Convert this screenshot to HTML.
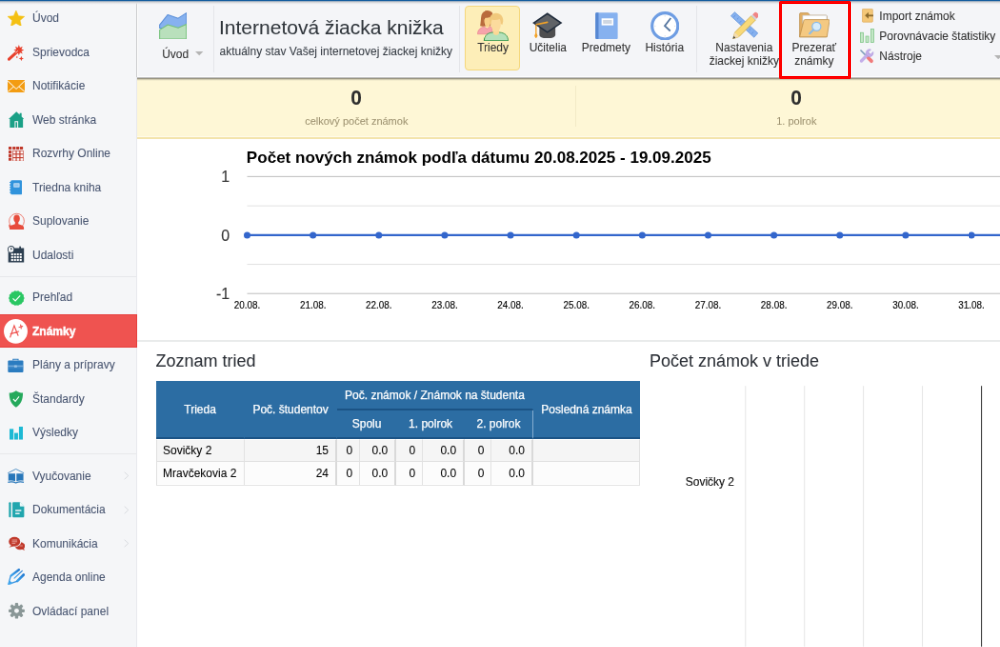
<!DOCTYPE html>
<html lang="sk">
<head>
<meta charset="utf-8">
<title>Internetová žiacka knižka</title>
<style>
*{box-sizing:border-box;margin:0;padding:0}
html,body{width:1000px;height:647px;overflow:hidden;background:#fff}
body{font-family:"Liberation Sans",Arial,sans-serif;font-size:12px;color:#333;position:relative}
#page{-webkit-text-stroke:.06px;position:absolute;left:0;top:0;width:1050px;height:680px;overflow:hidden;background:#fff;transform:scale(.95238);transform-origin:0 0;will-change:transform}
#topline{position:absolute;left:0;top:0;width:1050px;height:5px;background:linear-gradient(#125c9e 0,#125c9e 1px,#9fb0c2 1.5px,#cfd0d3 2.2px,#e4e5e8 3.2px,rgba(244,245,248,0) 4.8px);z-index:20}
/* sidebar */
#side{position:absolute;left:0;top:0;width:144px;height:680px;background:#f5f6f8;border-right:1px solid #e8e9ed}
#side .tx{position:absolute;left:34px;height:14px;line-height:14px;color:#485570;font-size:12px;white-space:nowrap}
#side svg{position:absolute}
#side .actbg{position:absolute;left:0;width:144px;background:#ef5350;border:1px solid #e63f3c;border-left:0}
#side .tx.act{color:#fff;font-weight:bold;-webkit-text-stroke:.45px #fff}
#side .sep{position:absolute;left:0;width:143px;height:1px;background:#e7e8eb}
#side svg.chev{left:129.6px;width:5.7px;height:9px}
/* toolbar */
#tb{position:absolute;left:144px;top:0;width:906px;height:81px;background:#f4f5f8;box-shadow:-1px 0 0 #cbcbcd,inset 1px -1px 0 rgba(255,255,255,.85);z-index:5}
#tbsh{position:absolute;left:144px;top:81px;width:906px;height:4px;background:linear-gradient(#fafbfd 0,#fafbfd .45px,rgba(0,0,0,.5) .55px,rgba(0,0,0,.45) 1.3px,rgba(0,0,0,.2) 2.3px,rgba(0,0,0,0) 3.8px);z-index:6}
#tb .vs{position:absolute;top:6px;width:1px;height:70px;background:#e4e5e9}
#tb .lbl{position:absolute;top:43px;text-align:center;white-space:nowrap;color:#303030;font-size:12px;line-height:14px;width:120px;margin-left:-60px}
#tb .ic{position:absolute}
#ttl{position:absolute;left:86px;top:16px;font-size:21px;line-height:25px;color:#2f353b;white-space:nowrap}
#sub{position:absolute;left:86.5px;top:47px;font-size:12px;line-height:14px;color:#363c44;white-space:nowrap}
#actb{position:absolute;left:344.2px;top:5.6px;width:58px;height:68px;background:#fdeeb8;border:1px solid #f5d77c;border-radius:4px}
#redbox{position:absolute;left:779px;top:1px;width:72px;height:78px;border:3px solid #fe0000;border-radius:1.5px;z-index:50}
#tb .sl{position:absolute;left:779.3px;font-size:12px;line-height:14px;color:#303030;white-space:nowrap}
/* band */
#band{position:absolute;left:144px;top:82px;width:906px;height:64px;background:#fef7d6;border-bottom:2px solid #f3e4ac;box-shadow:inset 0 -1px 0 #fffbe9}
#band .n{position:absolute;font-weight:bold;font-size:22px;color:#2e2e2e;transform:translateX(-50%) scaleX(.95);line-height:24px;top:9px}
#band .c{position:absolute;font-size:11px;color:#9d9270;transform:translateX(-50%);line-height:13px;top:39px;white-space:nowrap}
#band .d{position:absolute;left:460px;top:8px;width:1px;height:43px;background:#f3eac6}
h2{position:absolute;font-weight:normal;font-size:18px;color:#2b2f36;line-height:21px;white-space:nowrap}
#hr{position:absolute;left:144px;top:357px;width:906px;height:2px;background:#e9ebeb}
table{position:absolute;left:164px;top:400px;border-collapse:separate;border-spacing:0;font-size:12px;table-layout:fixed;width:508px}
th{background:#2c6da3;color:#fff;-webkit-text-stroke:.25px #fff;font-weight:normal;text-align:center;vertical-align:middle;white-space:nowrap;padding:0;line-height:14px}
tr.h1 th{height:31px;border-right:1px solid #2c6da3;border-bottom:2px solid #1b5385}
tr.h1 th.grp{height:31px}
tr.h1 th[rowspan]{height:61px;padding-top:1px}
tr.h2 th{height:30px;border-bottom:2px solid #1b5385;padding-top:0}
tr.h1 th.last{border-right:0}
tr.h2 th:last-child{border-right:1px solid #86add0}
td{height:25px;border-bottom:1px solid #e0e0e0;border-right:1px solid #e2e2e2;background:#f5f5f5;color:#000;padding:0 7px 0 6px;white-space:nowrap;vertical-align:middle;line-height:14px;text-align:right}
tbody tr:first-child td{height:24px;border-top:1px solid #fff}
td.g{border-right:2px solid #d9d9d9}
td:first-child{border-left:1px solid #e0e0e0}
tbody tr:nth-child(2) td{background:#fcfcfc}
td.l{text-align:left}
</style>
</head>
<body>
<div id="page">
<div id="side">
<svg viewBox="0 0 16 15.300" preserveAspectRatio="none" style="left:8.19px;top:10.92px;width:17.75px;height:16.59px"><polygon fill="#f4c013" stroke="#f4c013" stroke-width=".5" stroke-linejoin="round" points="8.00,0.05 10.32,5.26 16.00,5.86 11.76,9.68 12.94,15.27 8.00,12.42 3.06,15.27 4.24,9.68 0.00,5.86 5.68,5.26"/></svg>
<div class="tx" style="top:12px">Úvod</div>
<svg viewBox="0 0 16.200 16.300" preserveAspectRatio="none" style="left:8.40px;top:46.52px;width:17.01px;height:17.12px"><g fill="#e8402c"><path d="M1.400 14.500L9.800 6.700" stroke="#e8402c" stroke-width="2.900" stroke-linecap="round" fill="none"/><polygon points="11.30,0.00 12.33,2.81 15.05,1.55 13.79,4.27 16.60,5.30 13.79,6.33 15.05,9.05 12.33,7.79 11.30,10.60 10.27,7.79 7.55,9.05 8.81,6.33 6.00,5.30 8.81,4.27 7.55,1.55 10.27,2.81"/><polygon points="13.70,11.30 14.41,13.09 16.20,13.80 14.41,14.51 13.70,16.30 12.99,14.51 11.20,13.80 12.99,13.09"/><rect x="8.650" y="11.750" width="1.300" height="1.300"/></g><path d="M8 8.200l2.400-2.200" stroke="#f5f6f8" stroke-width=".7" fill="none"/></svg>
<div class="tx" style="top:48px">Sprievodca</div>
<svg viewBox="0 0 16 16" preserveAspectRatio="none" style="left:8.09px;top:83.90px;width:18.17px;height:13.12px"><rect x="0" y="0" width="16" height="16" fill="#f39c12"/><path d="M0 1l8 10.500L16 1M0 15.200l5.800-7M16 15.200l-5.800-7" fill="none" stroke="#fdf3e0" stroke-width=".9"/></svg>
<div class="tx" style="top:83px">Notifikácie</div>
<svg viewBox="0 0 16 16" preserveAspectRatio="none" style="left:8.93px;top:117.39px;width:16.48px;height:17.01px"><path fill="#1aa086" d="M8 .3l3.300 3V1.700h2v3.400L16 7.600h-1.300V16H1.300V7.600H0z"/><path fill="#f5f6f8" d="M6.200 9.600h3.600V16H6.200z"/><path fill="#1aa086" d="M7.200 10.600h1.600V16H7.200z"/></svg>
<div class="tx" style="top:119px">Web stránka</div>
<svg viewBox="0 0 16 16" preserveAspectRatio="none" style="left:9.45px;top:153.72px;width:15.75px;height:15.33px"><rect x="0" y="0" width="3.200" height="3.200" fill="#c0392b"/><rect x="4.30" y="0" width="3.200" height="3.200" fill="#c0392b"/><rect x="0" y="4.30" width="3.200" height="3.200" fill="#c0392b"/><rect x="8.23" y="0" width="3.200" height="3.200" fill="#c0392b"/><rect x="0" y="8.23" width="3.200" height="3.200" fill="#c0392b"/><rect x="12.16" y="0" width="3.200" height="3.200" fill="#c0392b"/><rect x="0" y="12.16" width="3.200" height="3.200" fill="#c0392b"/><rect x="4.200" y="4.200" width="11.800" height="11.800" fill="#c0392b"/><rect x="4.80" y="4.80" width="2.800" height="2.800" fill="#fdf3f2"/><rect x="8.73" y="4.80" width="2.800" height="2.800" fill="#fdf3f2"/><rect x="12.66" y="4.80" width="2.800" height="2.800" fill="#fdf3f2"/><rect x="4.80" y="8.73" width="2.800" height="2.800" fill="#fdf3f2"/><rect x="8.73" y="8.73" width="2.800" height="2.800" fill="#fdf3f2"/><rect x="12.66" y="8.73" width="2.800" height="2.800" fill="#fdf3f2"/><rect x="4.80" y="12.66" width="2.800" height="2.800" fill="#fdf3f2"/><rect x="8.73" y="12.66" width="2.800" height="2.800" fill="#fdf3f2"/><rect x="12.66" y="12.66" width="2.800" height="2.800" fill="#fdf3f2"/></svg>
<div class="tx" style="top:154px">Rozvrhy Online</div>
<svg viewBox="0 0 16 16" preserveAspectRatio="none" style="left:9.97px;top:189.00px;width:13.44px;height:15.54px"><rect x="1.300" y=".2" width="14.500" height="15.600" rx="1.700" fill="#3093dc"/><path d="M0 2.600h2.200M0 5.300h2.200M0 8h2.200M0 10.700h2.200M0 13.400h2.200" stroke="#3093dc" stroke-width="1.100"/><rect x="5" y="3.400" width="7.600" height="4.600" rx=".7" fill="#bfdcf4"/><rect x="6.200" y="4.500" width="5.200" height="2.300" fill="#8fc3ee"/></svg>
<div class="tx" style="top:190px">Triedna kniha</div>
<svg viewBox="0 0 16.300 17.500" preserveAspectRatio="none" style="left:8.61px;top:222.81px;width:17.12px;height:18.38px"><path d="M3.500 14.600A7.500 7.500 0 1 1 13.200 14.200" fill="none" stroke="#ec6a5c" stroke-width=".8"/><path fill="#e74c3c" d="M.2 11.800l3.400 2.600-3 .9z"/><g fill="#e74c3c"><ellipse cx="8.150" cy="6.300" rx="3.100" ry="3.900"/><path d="M6.500 9h3.300v2.600l4 1.500c1 .4 1.500 1.200 1.500 2.200v2.200H1v-2.200c0-1 .5-1.800 1.500-2.200l4-1.500z"/></g></svg>
<div class="tx" style="top:225px">Suplovanie</div>
<svg viewBox="0 0 16 16" preserveAspectRatio="none" style="left:8.09px;top:258.30px;width:17.43px;height:17.85px"><path fill="#2c3e50" d="M2.200 2.300h13.600v13.400H.6V6z"/><rect x="11.300" y=".6" width="1.500" height="3" fill="#2c3e50"/><rect x="3.40" y="7.20" width="1.900" height="1.900" fill="#fff"/><rect x="6.15" y="7.20" width="1.900" height="1.900" fill="#fff"/><rect x="8.90" y="7.20" width="1.900" height="1.900" fill="#fff"/><rect x="11.65" y="7.20" width="1.900" height="1.900" fill="#fff"/><rect x="3.40" y="9.85" width="1.900" height="1.900" fill="#fff"/><rect x="6.15" y="9.85" width="1.900" height="1.900" fill="#fff"/><rect x="8.90" y="9.85" width="1.900" height="1.900" fill="#fff"/><rect x="11.65" y="9.85" width="1.900" height="1.900" fill="#fff"/><rect x="3.40" y="12.50" width="1.900" height="1.900" fill="#fff"/><rect x="6.15" y="12.50" width="1.900" height="1.900" fill="#fff"/><rect x="8.90" y="12.50" width="1.900" height="1.900" fill="#fff"/><rect x="11.65" y="12.50" width="1.900" height="1.900" fill="#fff"/><circle cx="3.300" cy="3.500" r="3" fill="#f5f6f8" stroke="#2c3e50" stroke-width=".9"/><path d="M3.300 1.800v1.900l1.200-.9" fill="none" stroke="#2c3e50" stroke-width=".7"/></svg>
<div class="tx" style="top:261px">Udalosti</div>
<div class="sep" style="top:290px"></div>
<svg viewBox="0 0 16 16" preserveAspectRatio="none" style="left:8.82px;top:305.24px;width:16.70px;height:16.07px"><polygon fill="#2ac763" points="16.00,8.00 15.17,9.64 15.21,11.47 13.75,12.58 12.99,14.25 11.19,14.62 9.78,15.80 8.00,15.35 6.22,15.80 4.81,14.62 3.01,14.25 2.25,12.58 0.79,11.47 0.83,9.64 0.00,8.00 0.83,6.36 0.79,4.53 2.25,3.42 3.01,1.75 4.81,1.38 6.22,0.20 8.00,0.65 9.78,0.20 11.19,1.38 12.99,1.75 13.75,3.42 15.21,4.53 15.17,6.36"/><path d="M4.300 8.300l2.500 2.600 4.900-5.600" fill="none" stroke="#fff" stroke-width="1.150"/></svg>
<div class="tx" style="top:305px">Prehľad</div>
<div class="actbg" style="top:330px;height:35px"></div>
<svg viewBox="0 0 16 16" preserveAspectRatio="none" style="left:4.20px;top:335.27px;width:24.99px;height:25.73px"><circle cx="8" cy="8" r="8" fill="#fff"/><path d="M4.300 11.800L7 4.300l2.600 6.400M4.600 9.700l5.400-1.600M10.300 5.300l2.300-.6M11.300 3.800l.4 2.400" fill="none" stroke="#ef5350" stroke-width=".75" stroke-linecap="round"/></svg>
<div class="tx act" style="top:341px">Známky</div>
<svg viewBox="0 0 16 16" preserveAspectRatio="none" style="left:8.29px;top:375.69px;width:16.80px;height:16.07px"><path d="M5.500 2.600V1.200h5v1.400" fill="none" stroke="#2b7cc0" stroke-width="1"/><rect x=".3" y="2.400" width="15.400" height="12.600" rx="1" fill="#2b7cc0"/><rect x=".3" y="7.700" width="15.400" height=".9" fill="#9cc4e6"/><rect x=".3" y="9.600" width="15.400" height=".6" fill="#6aa5d6"/><rect x="6.600" y="7.400" width="2.800" height="2.400" rx=".5" fill="#9cc4e6"/></svg>
<div class="tx" style="top:376px">Plány a prípravy</div>
<svg viewBox="0 0 16 16" preserveAspectRatio="none" style="left:9.45px;top:410.44px;width:15.75px;height:17.96px"><path fill="#25a95c" d="M8 .2c2.200 1.400 4.600 2 7.300 2.100 0 6.300-2.300 11-7.300 13.500C3 13.300.7 8.600.7 2.300 3.400 2.200 5.800 1.600 8 .2z"/><path d="M5 8l2.200 2.200 4-4.600" fill="none" stroke="#fff" stroke-width="1.100"/></svg>
<div class="tx" style="top:412px">Štandardy</div>
<svg viewBox="0 0 16 16" preserveAspectRatio="none" style="left:10.08px;top:448.25px;width:14.18px;height:13.55px"><rect x="0" y="2.800" width="4.700" height="13.200" fill="#1db9d4"/><rect x="5.700" y="7.800" width="4.400" height="8.200" fill="#1db9d4"/><rect x="11.200" y="0" width="4.800" height="16" fill="#1db9d4"/></svg>
<div class="tx" style="top:447px">Výsledky</div>
<div class="sep" style="top:476px"></div>
<svg viewBox="0 0 16 16" preserveAspectRatio="none" style="left:8.40px;top:491.72px;width:17.32px;height:16.07px"><path d="M.2 4.700L8 .5l7.800 4.200" fill="none" stroke="#2877ba" stroke-width=".75"/><path fill="#2877ba" d="M.7 5.300h6.700v7.900C5.400 12.300 3 12.200.7 12.800zM15.300 5.300H8.600v7.900c2-.9 4.400-1 6.700-.4z"/><path d="M.3 14.300c2.700-.8 5.500-.6 7.700.7 2.200-1.300 5-1.500 7.700-.7" fill="none" stroke="#2877ba" stroke-width="1.200"/></svg>
<svg class="chev" viewBox="0 0 6 9" style="top:495.45px"><path d="M.7.5l4.300 4-4.300 4" fill="none" stroke="#d4d6da" stroke-width=".9"/></svg>
<div class="tx" style="top:493px">Vyučovanie</div>
<svg viewBox="0 0 16 16" preserveAspectRatio="none" style="left:8.82px;top:527.10px;width:16.70px;height:16.59px"><rect x=".3" y=".3" width="2.200" height="15.400" rx="1" fill="#21a6ae"/><path fill="#21a6ae" d="M5.200.3h6.300l4.200 4.200v9.900c0 .8-.5 1.300-1.300 1.300H5.200c-.8 0-1.300-.5-1.300-1.300V1.600c0-.8.500-1.300 1.300-1.300z"/><path fill="#eef8f9" d="M11.300 0v3.500c0 .7.400 1.100 1.100 1.100H16z"/><rect x="6.800" y="8" width="6" height="1.400" fill="#f5f6f8"/><rect x="6.800" y="11.100" width="4.300" height="1.400" fill="#f5f6f8"/></svg>
<svg class="chev" viewBox="0 0 6 9" style="top:530.95px"><path d="M.7.5l4.300 4-4.300 4" fill="none" stroke="#d4d6da" stroke-width=".9"/></svg>
<div class="tx" style="top:528px">Dokumentácia</div>
<svg viewBox="0 0 16 16" preserveAspectRatio="none" style="left:8.61px;top:562.59px;width:17.12px;height:15.75px"><g fill="#c0392b"><ellipse cx="11.200" cy="10.400" rx="5" ry="4.100"/><path d="M12.500 13.600l3.400 1.600-1.500-3z"/></g><ellipse cx="6" cy="6" rx="6.300" ry="5.600" fill="#f5f6f8"/><g fill="#c0392b"><ellipse cx="5.800" cy="5.800" rx="5.600" ry="5"/><path d="M3.300 9.300L.3 12l4.900-1.300z"/></g><path d="M3.300 4.100h5.200M3.300 5.900h5.200M3.300 7.700h3.500" stroke="#e9a7a0" stroke-width=".9"/><path d="M10.700 10.200h3.200" stroke="#e9a7a0" stroke-width=".8"/></svg>
<svg class="chev" viewBox="0 0 6 9" style="top:566.45px"><path d="M.7.5l4.300 4-4.300 4" fill="none" stroke="#d4d6da" stroke-width=".9"/></svg>
<div class="tx" style="top:564px">Komunikácia</div>
<svg viewBox="0 0 17 16.800" preserveAspectRatio="none" style="left:8.40px;top:596.93px;width:17.85px;height:17.64px"><defs><linearGradient id="pg" x1="0" y1="1" x2="1" y2="0"><stop offset="0" stop-color="#3fa4ec"/><stop offset="1" stop-color="#237bd2"/></linearGradient></defs><g fill="none" stroke="url(#pg)" stroke-linecap="round" stroke-linejoin="round"><path d="M3.600 7L11.300 1.200" stroke-width="2.300"/><path d="M6.700 9.700L14.600 2.300" stroke-width="1.100"/><path d="M9.700 12.500L16 6.200" stroke-width="2.500"/><path d="M3 7.600L.8 15.700l8.600-2.900" stroke-width="1.200"/></g><path fill="#3fa4ec" d="M.4 16.300l1.300-4.600 3.600 3.200z"/></svg>
<div class="tx" style="top:599px">Agenda online</div>
<svg viewBox="0 0 16 16" preserveAspectRatio="none" style="left:8.61px;top:633.15px;width:16.91px;height:16.59px"><g fill="#8a9797"><rect x="6.400" y="0" width="3.200" height="4.500" rx=".9" transform="rotate(0 8 8)"/><rect x="6.400" y="0" width="3.200" height="4.500" rx=".9" transform="rotate(45 8 8)"/><rect x="6.400" y="0" width="3.200" height="4.500" rx=".9" transform="rotate(90 8 8)"/><rect x="6.400" y="0" width="3.200" height="4.500" rx=".9" transform="rotate(135 8 8)"/><rect x="6.400" y="0" width="3.200" height="4.500" rx=".9" transform="rotate(180 8 8)"/><rect x="6.400" y="0" width="3.200" height="4.500" rx=".9" transform="rotate(225 8 8)"/><rect x="6.400" y="0" width="3.200" height="4.500" rx=".9" transform="rotate(270 8 8)"/><rect x="6.400" y="0" width="3.200" height="4.500" rx=".9" transform="rotate(315 8 8)"/><circle cx="8" cy="8" r="5.700"/></g><circle cx="8" cy="8" r="2.300" fill="#f5f6f8"/></svg>
<div class="tx" style="top:635px">Ovládací panel</div>
</div>
<div id="tb">
<div class="vs" style="left:80.01px"></div>
<div class="vs" style="left:338.31px"></div>
<div class="vs" style="left:587.26px"></div>
<svg class="ic" viewBox="0 0 28 27" preserveAspectRatio="none" style="left:22.89px;top:12.60px;width:29.29px;height:28.56px"><path fill="#86b1ef" stroke="#5b8fd9" stroke-width="1" stroke-linejoin="round" d="M.6 12.400L8.800 2.300l10.400 3.500L27.400.6v15H.6z"/><path fill="#b9e0bc" stroke="#74c079" stroke-width="1" stroke-linejoin="round" d="M.6 17.400l8.200-5.100 10.400 3 8.200-3.500v14.600H.6z"/></svg>
<div class="lbl" style="left:40.22px;top:50px">Úvod</div>
<svg class="ic" viewBox="0 0 8 4" preserveAspectRatio="none" style="left:61.11px;top:54.39px;width:8.40px;height:4.20px"><path d="M0 0h8L4 4z" fill="#b4b4b4"/></svg>
<div id="ttl">Internetová žiacka knižka</div>
<div id="sub">aktuálny stav Vašej internetovej žiackej knižky</div>
<div id="actb"></div>
<svg class="ic" viewBox="0 0 31.300 30.800" preserveAspectRatio="none" style="left:357.00px;top:10.50px;width:32.87px;height:32.34px"><path fill="#b96b3d" d="M3 15.600c.3-2.400.7-5.400.9-8.500C4.200 3 6.500.1 9.900.1c2.400 0 4.300 1 5.500 2.600l-2 13H7.500c-1.300.5-3 .4-4.500-.1z"/><path fill="#f9cf88" d="M7 10.200c0-1.400.5-2.400 1.400-2.900 1.700.3 3.300-.1 4.600-.9l.7 5.500-1.600 4.500H9.300c-1.500-1.400-2.300-3.700-2.300-6.200z"/><path fill="#f5a3ab" stroke="#ea7c8c" stroke-width=".6" d="M.4 23.600c.2-4 2.700-6.500 6.500-7.300l1.600 1 1.400.9 1.400-.9 1.600-1 2.300.6v6.700z"/><path fill="#b5e1ba" stroke="#3f9b51" stroke-width=".9" d="M7 30.500c0-5.300 3.300-8.200 8.900-8.600h6.200c5.600.4 8.900 3.300 8.900 8.600z"/><path fill="#3f9b51" d="M6.900 29.800h24.200v1H6.900z"/><path fill="#fbd894" d="M16 19.500h5.900v3.300c-.5 1.100-1.700 1.800-2.950 1.800s-2.450-.7-2.950-1.800z"/><path fill="#f1c97c" d="M12.500 11.500c-.6-5 1.700-8.700 6.300-8.900 4.700.2 7.500 3.600 7.200 8.200l-.8 3.500-1.600-1-11 .2z"/><path fill="#fcdb9d" d="M14 13.300c0-1.800.3-3.200 1-4.300 1.900.9 5 .7 7.500-.5.800 1.300 1.200 2.900 1.200 4.800 0 4.600-2.200 8.200-4.850 8.200S14 17.900 14 13.300z"/></svg>
<div class="lbl" style="left:373.59px">Triedy</div>
<svg class="ic" viewBox="0 0 30 26" preserveAspectRatio="none" style="left:415.38px;top:12.81px;width:31.50px;height:27.51px"><path fill="#f2a227" d="M3 11.200h1.300v9.500l1 2.600-1.650 2.700L2 23.300l1-2.600z"/><path fill="#4e4e50" d="M7 12.500h16v10c0 1.900-3.500 3.400-8 3.400s-8-1.500-8-3.400z"/><path fill="#5f6267" stroke="#1f2b3b" stroke-width="1.400" stroke-linejoin="miter" d="M1.300 10.500L15 1.200l13.700 9.300L15 19.800z"/><path d="M4 12l11-2.200" stroke="#f2a227" stroke-width="1.500" stroke-linecap="round" fill="none"/></svg>
<div class="lbl" style="left:431.34px">Učitelia</div>
<svg class="ic" viewBox="0 0 22.600 27" preserveAspectRatio="none" style="left:480.90px;top:13.02px;width:23.84px;height:28.25px"><rect x=".2" y=".2" width="22.200" height="26.600" rx="1.300" fill="#86b1ef"/><path fill="#5687d2" d="M.2 1.500c0-.8.500-1.300 1.300-1.300h1.800v26.600H1.500c-.8 0-1.300-.5-1.300-1.300z"/><rect x="6.300" y="6" width="11.800" height="7" fill="#fff"/><rect x="7.800" y="7.600" width="8.800" height="3.800" fill="#ced6e1"/></svg>
<div class="lbl" style="left:492.45px">Predmety</div>
<svg class="ic" viewBox="0 0 29 29" preserveAspectRatio="none" style="left:538.54px;top:11.65px;width:30.45px;height:30.66px"><circle cx="14.500" cy="14.500" r="12.900" fill="#fff" stroke="#6e9de3" stroke-width="3"/><path d="M20.300 6.600l-6 7.800 5.500 5" fill="none" stroke="#54759f" stroke-width="1.700"/><path d="M14.500 4v1.200M14.500 23.800V25M4 14.500h1.200M23.800 14.500H25" stroke="#d5dbe4" stroke-width=".9"/></svg>
<div class="lbl" style="left:553.77px">História</div>
<svg class="ic" viewBox="0 0 28 27.500" preserveAspectRatio="none" style="left:622.65px;top:12.08px;width:29.61px;height:28.88px"><path fill="#86b1ef" stroke="#5b8fd9" stroke-width=".7" d="M.4 4.500L4.200.7l23 21-3.800 4.200z"/><path d="M5 3.800l-2 2M8 6.500l-1.400 1.400M11 9.300l-2 2M14 12l-1.400 1.400M17 14.800l-2 2M20 17.500l-1.400 1.400M23 20.300l-2 2" stroke="#4a7fd0" stroke-width=".6"/><path fill="#f8d978" stroke="#c9a43e" stroke-width=".7" d="M4.300 21L20.500 4.500l4.300 4.200L8.600 25.200l-6 2.200z"/><path fill="#cfd3d8" d="M20.500 4.500l1.400-1.400 4.300 4.200-1.400 1.400z"/><path fill="#f08585" d="M21.900 3.100l1.700-1.700c.8-.8 2-.8 2.800 0l1.300 1.300c.8.800.8 2 0 2.800L26 7.200z"/><path fill="#f3dcb0" d="M4.300 21l4.300 4.200-6 2.200z"/><path fill="#444" d="M3.300 24.600l1.700 1.800-2.700 1z"/></svg>
<div class="lbl" style="left:637.35px">Nastavenia<br>žiackej knižky</div>
<svg class="ic" viewBox="0 0 30 25" preserveAspectRatio="none" style="left:694.89px;top:13.33px;width:31.82px;height:26.36px"><path fill="#e2ae62" stroke="#b98a45" stroke-width=".6" d="M.5 1.700c0-.7.500-1.200 1.200-1.200h6.600c.6 0 1 .2 1.300.7l.9 1.700h16c.7 0 1.200.5 1.200 1.200v20.300H.5z"/><path fill="#fff" stroke="#b9c3cf" stroke-width=".5" d="M3.600 3h23.800v8H3.600z"/><path fill="#f4c982" stroke="#b98a45" stroke-width=".7" stroke-linejoin="round" d="M.6 24.500L4.700 8.100c.2-.6.600-.9 1.200-.9h23.200c.7 0 1.100.5 1 1.200l-2.300 15.100c-.1.600-.5 1-1.200 1z"/><circle cx="17.300" cy="14.100" r="4.300" fill="#d6ecfb" stroke="#8abbe8" stroke-width="1.200"/><path d="M14.200 17.400l-3.700 3.700" stroke="#8abbe8" stroke-width="2" stroke-linecap="round"/></svg>
<div class="lbl" style="left:710.85px">Prezerať<br>známky</div>
<svg class="ic" viewBox="0 0 12.200 13.700" preserveAspectRatio="none" style="left:760.51px;top:9.35px;width:12.81px;height:14.60px"><rect x=".4" y=".4" width="10.400" height="12.900" rx=".7" fill="#f4c777" stroke="#e0ae62" stroke-width=".7"/><path d="M4.300 6.900h7.600" fill="none" stroke="#8d6b2c" stroke-width="1.700"/><path fill="#8d6b2c" d="M6.700 3.600v6.600L3 6.900z"/></svg>
<svg class="ic" viewBox="0 0 14.500 14.300" preserveAspectRatio="none" style="left:758.84px;top:30.34px;width:15.23px;height:15.12px"><g fill="#c3e6c6" stroke="#79c381" stroke-width=".7"><rect x=".55" y="4" width="2.900" height="9.800"/><rect x="5.750" y="7.600" width="2.900" height="6.200"/><rect x="10.950" y=".55" width="2.900" height="13.250"/></g></svg>
<svg class="ic" viewBox="0 0 16 16" preserveAspectRatio="none" style="left:758.41px;top:51.34px;width:15.75px;height:15.96px"><path d="M2 2l10.600 10.600" stroke="#7f9dbb" stroke-width="1.700" stroke-linecap="round"/><path d="M9.800 9.800l3.400 3.400" stroke="#f07a7a" stroke-width="3.800" stroke-linecap="round"/><path d="M2.500 13L9.800 5.600" stroke="#c3aee9" stroke-width="3.400" stroke-linecap="round"/><path d="M2.500 13L9.800 5.600" stroke="#9f86d0" stroke-width="3.400" stroke-linecap="round" opacity=".0"/><path fill="#c3aee9" stroke="#a48bd6" stroke-width=".5" d="M9 3.200C9.700 1 12 .1 14 .8l-2.500 2.500.4 2 2 .4 2.500-2.500c.6 2-.3 4.200-2.500 5-1.600.6-3.300 0-4.300-1.200C8.700 6 8.500 4.500 9 3.200z" transform="translate(-1.400 .2)"/></svg>
<div class="sl" style="top:10px">Import známok</div>
<div class="sl" style="top:31px">Porovnávacie štatistiky</div>
<div class="sl" style="top:52px">Nástroje</div>
<svg class="ic" viewBox="0 0 8 4" preserveAspectRatio="none" style="left:900.48px;top:57.96px;width:8.40px;height:4.20px"><path d="M0 0h8L4 4z" fill="#b4b4b4"/></svg>
</div>
<div id="tbsh"></div>
<div id="topline"></div>
<div id="band"><div class="n" style="left:230.3px">0</div><div class="c" style="left:230.3px">celkový počet známok</div><div class="d"></div><div class="n" style="left:692.3px">0</div><div class="c" style="left:692.3px">1. polrok</div></div>
<svg id="lc" width="906.15" height="212.1" viewBox="137 139 863 202" style="position:absolute;left:143.85px;top:145.95px" font-family="'Liberation Sans',Arial,sans-serif">
<text x="246.4" y="162.6" font-size="16.25" font-weight="bold" fill="#000">Počet nových známok podľa dátumu 20.08.2025 - 19.09.2025</text>
<rect x="247.0" y="176.00" width="760" height="1" fill="#c0c0c0"/>
<rect x="247.0" y="205.30" width="760" height="1" fill="#e2e2e2"/>
<rect x="247.0" y="234.60" width="760" height="1" fill="#333"/>
<rect x="247.0" y="263.80" width="760" height="1" fill="#e2e2e2"/>
<rect x="247.0" y="293.00" width="760" height="1" fill="#c0c0c0"/>
<path d="M247.0 235.1H1010" stroke="#3366cc" stroke-width="2" fill="none"/>
<circle cx="247.00" cy="235.1" r="3.350" fill="#3366cc"/>
<text transform="translate(247.00 308.5) scale(.9 1)" font-size="10.5" text-anchor="middle" fill="#000" stroke="#000" stroke-width=".12">20.08.</text>
<circle cx="312.85" cy="235.1" r="3.350" fill="#3366cc"/>
<text transform="translate(312.85 308.5) scale(.9 1)" font-size="10.5" text-anchor="middle" fill="#000" stroke="#000" stroke-width=".12">21.08.</text>
<circle cx="378.70" cy="235.1" r="3.350" fill="#3366cc"/>
<text transform="translate(378.70 308.5) scale(.9 1)" font-size="10.5" text-anchor="middle" fill="#000" stroke="#000" stroke-width=".12">22.08.</text>
<circle cx="444.55" cy="235.1" r="3.350" fill="#3366cc"/>
<text transform="translate(444.55 308.5) scale(.9 1)" font-size="10.5" text-anchor="middle" fill="#000" stroke="#000" stroke-width=".12">23.08.</text>
<circle cx="510.40" cy="235.1" r="3.350" fill="#3366cc"/>
<text transform="translate(510.40 308.5) scale(.9 1)" font-size="10.5" text-anchor="middle" fill="#000" stroke="#000" stroke-width=".12">24.08.</text>
<circle cx="576.25" cy="235.1" r="3.350" fill="#3366cc"/>
<text transform="translate(576.25 308.5) scale(.9 1)" font-size="10.5" text-anchor="middle" fill="#000" stroke="#000" stroke-width=".12">25.08.</text>
<circle cx="642.10" cy="235.1" r="3.350" fill="#3366cc"/>
<text transform="translate(642.10 308.5) scale(.9 1)" font-size="10.5" text-anchor="middle" fill="#000" stroke="#000" stroke-width=".12">26.08.</text>
<circle cx="707.95" cy="235.1" r="3.350" fill="#3366cc"/>
<text transform="translate(707.95 308.5) scale(.9 1)" font-size="10.5" text-anchor="middle" fill="#000" stroke="#000" stroke-width=".12">27.08.</text>
<circle cx="773.80" cy="235.1" r="3.350" fill="#3366cc"/>
<text transform="translate(773.80 308.5) scale(.9 1)" font-size="10.5" text-anchor="middle" fill="#000" stroke="#000" stroke-width=".12">28.08.</text>
<circle cx="839.65" cy="235.1" r="3.350" fill="#3366cc"/>
<text transform="translate(839.65 308.5) scale(.9 1)" font-size="10.5" text-anchor="middle" fill="#000" stroke="#000" stroke-width=".12">29.08.</text>
<circle cx="905.50" cy="235.1" r="3.350" fill="#3366cc"/>
<text transform="translate(905.50 308.5) scale(.9 1)" font-size="10.5" text-anchor="middle" fill="#000" stroke="#000" stroke-width=".12">30.08.</text>
<circle cx="971.35" cy="235.1" r="3.350" fill="#3366cc"/>
<text transform="translate(971.35 308.5) scale(.9 1)" font-size="10.5" text-anchor="middle" fill="#000" stroke="#000" stroke-width=".12">31.08.</text>
<text x="229.6" y="181.9" font-size="15.240" text-anchor="end" fill="#363636" stroke="#363636" stroke-width=".12">1</text>
<text x="229.6" y="240.5" font-size="15.240" text-anchor="end" fill="#363636" stroke="#363636" stroke-width=".12">0</text>
<text x="229.6" y="298.9" font-size="15.240" text-anchor="end" fill="#363636" stroke="#363636" stroke-width=".12">-1</text>
</svg>
<div id="hr"></div>
<h2 style="left:163.5px;top:369px">Zoznam tried</h2>
<h2 style="left:682px;top:369px">Počet známok v triede</h2>
<table><colgroup><col style="width:93.20px"><col style="width:96.80px"><col style="width:24.10px"><col style="width:38.10px"><col style="width:28.00px"><col style="width:43.90px"><col style="width:28.40px"><col style="width:43.50px"><col style="width:112.00px"></colgroup>
<thead><tr class="h1"><th rowspan="2">Trieda</th><th rowspan="2">Poč. študentov</th><th colspan="6" class="grp">Poč. známok / Známok na študenta</th><th rowspan="2" class="last">Posledná známka</th></tr>
<tr class="h2"><th colspan="2">Spolu</th><th colspan="2">1. polrok</th><th colspan="2">2. polrok</th></tr></thead><tbody>
<tr><td class="l">Sovičky 2</td><td class="g">15</td><td>0</td><td class="g">0.0</td><td>0</td><td class="g">0.0</td><td>0</td><td class="g">0.0</td><td></td></tr>
<tr><td class="l">Mravčekovia 2</td><td class="g">24</td><td>0</td><td class="g">0.0</td><td>0</td><td class="g">0.0</td><td>0</td><td class="g">0.0</td><td></td></tr>
</tbody></table>
<svg id="bc" width="378" height="278.25" viewBox="640 382 360 265" style="position:absolute;left:672px;top:401.1px" font-family="'Liberation Sans',Arial,sans-serif">
<rect x="745.0" y="386" width="1" height="270" fill="#e6e6e6"/>
<rect x="804.0" y="386" width="1" height="270" fill="#e6e6e6"/>
<rect x="862.9" y="386" width="1" height="270" fill="#e6e6e6"/>
<rect x="921.9" y="386" width="1" height="270" fill="#e6e6e6"/>
<rect x="981" y="386" width="1" height="270" fill="#333"/>
<text x="734.3" y="485.4" font-size="11.430" text-anchor="end" fill="#111" stroke="#111" stroke-width=".12">Sovičky 2</text>
</svg>
</div>
<div id="redbox"></div>
</body>
</html>
